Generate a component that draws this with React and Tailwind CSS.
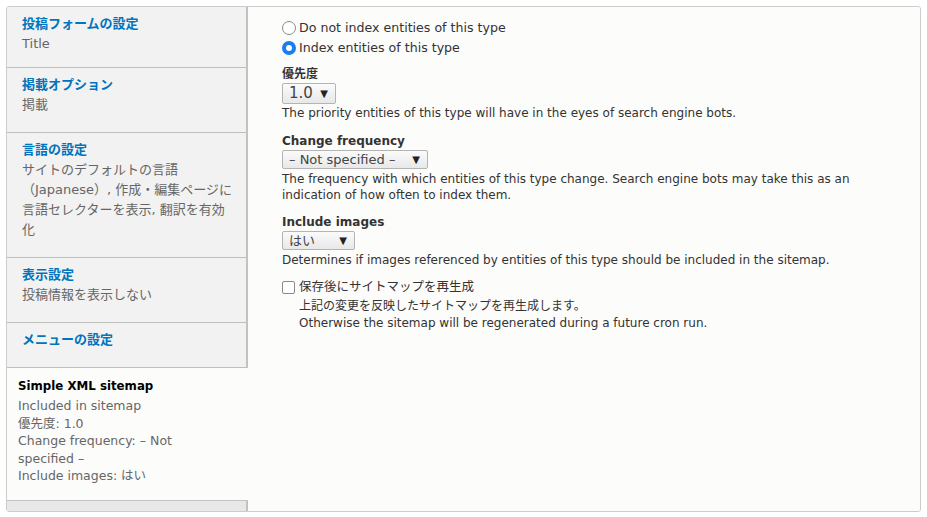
import React from 'react';

const font = { fontFamily: '"DejaVu Sans", "Noto Sans CJK JP", sans-serif' };

const tabs = [
  { title: '投稿フォームの設定', desc: ['Title'] },
  { title: '掲載オプション', desc: ['掲載'] },
  {
    title: '言語の設定',
    desc: ['サイトのデフォルトの言語', '（Japanese）, 作成・編集ページに', '言語セレクターを表示, 翻訳を有効', '化'],
  },
  { title: '表示設定', desc: ['投稿情報を表示しない'] },
  { title: 'メニューの設定', desc: [] },
];

function Select({ value, width, big }) {
  return (
    <div
      className={`flex items-center justify-between border border-[#b4b4b4] rounded-[2px] bg-gradient-to-b from-[#fbfbfb] to-[#e8e8e8] pl-[6px] pr-[7px] text-[#444] ${
        big ? 'h-[21px] text-[15px]' : 'h-[19px] text-[13px]'
      }`}
      style={{ width }}
    >
      <span>{value}</span>
      <span className="text-[10px] text-[#222]">▼</span>
    </div>
  );
}

export default function App() {
  return (
    <div className="min-h-screen bg-white pt-[6px] px-[6px]" style={font}>
      <div className="flex h-[506px] w-[915px] border border-[#cccccc] rounded-[3px] overflow-hidden">
        {/* vertical tabs */}
        <div className="w-[241px] shrink-0 flex flex-col bg-[#f2f2f2] border-r-2 border-[#c2c2c2]">
          {tabs.map((t, i) => (
            <div
              key={t.title}
              className={`pl-[15px] pr-[6px] border-b border-[#bfbfbf] pt-[7px] ${i === 0 ? 'pb-[13px]' : 'pb-[17px]'}`}
            >
              <div className="text-[13px] leading-[20px] font-bold text-[#0074bd]">{t.title}</div>
              {t.desc.map((d) => (
                <div key={d} className="text-[13px] leading-[20px] text-[#666] whitespace-nowrap">
                  {d}
                </div>
              ))}
            </div>
          ))}
          <div className="bg-[#fcfcfa] -mr-[2px] pl-[11px] pt-[8px] pb-[15px] border-b border-[#c4c4c4] text-[12.5px] leading-[17.5px]">
            <div className="font-bold text-black text-[11.8px] leading-[20px] mb-[1px]">Simple XML sitemap</div>
            <div className="text-[#666]">Included in sitemap</div>
            <div className="text-[#666]">優先度: 1.0</div>
            <div className="text-[#666] w-[170px]">Change frequency: – Not specified –</div>
            <div className="text-[#666]">Include images: はい</div>
          </div>
          <div className="flex-1 bg-[#e8e8e8]" />
        </div>

        {/* content */}
        <div className="flex-1 bg-[#fcfcfa] pl-[34px] pt-[11px] text-[12px] text-[#333]">
          <label className="flex items-center gap-[3px] h-[20px] text-[12.6px]">
            <span className="w-[14px] h-[14px] rounded-full border border-[#8a8a8a] bg-white" />
            Do not index entities of this type
          </label>
          <label className="flex items-center gap-[3px] h-[20px] text-[12.6px]">
            <span className="w-[14px] h-[14px] rounded-full bg-[#1a7df0] flex items-center justify-center">
              <span className="w-[6px] h-[6px] rounded-full bg-white" />
            </span>
            Index entities of this type
          </label>

          <div className="mt-[7px] font-bold leading-[18px] text-[12px]">優先度</div>
          <Select value="1.0" width={54} big />
          <div className="mt-[1px] leading-[17px]">The priority entities of this type will have in the eyes of search engine bots.</div>

          <div className="mt-[10px] font-bold leading-[18px] text-[12px]">Change frequency</div>
          <Select value="– Not specified –" width={146} />
          <div className="mt-[2px] leading-[16px] w-[572px]">
            The frequency with which entities of this type change. Search engine bots may take this as an indication of how often to index them.
          </div>

          <div className="mt-[10px] font-bold leading-[18px] text-[12px]">Include images</div>
          <Select value="はい" width={73} />
          <div className="mt-[2px] leading-[17px]">Determines if images referenced by entities of this type should be included in the sitemap.</div>

          <label className="mt-[9px] flex items-center gap-[4px] h-[18px] text-[12.5px]">
            <span className="w-[13px] h-[13px] rounded-[2px] border border-[#8a8a8a] bg-white" />
            保存後にサイトマップを再生成
          </label>
          <div className="mt-[2px] pl-[17px] leading-[17px]">
            <div>上記の変更を反映したサイトマップを再生成します。</div>
            <div>Otherwise the sitemap will be regenerated during a future cron run.</div>
          </div>
        </div>
      </div>
    </div>
  );
}
